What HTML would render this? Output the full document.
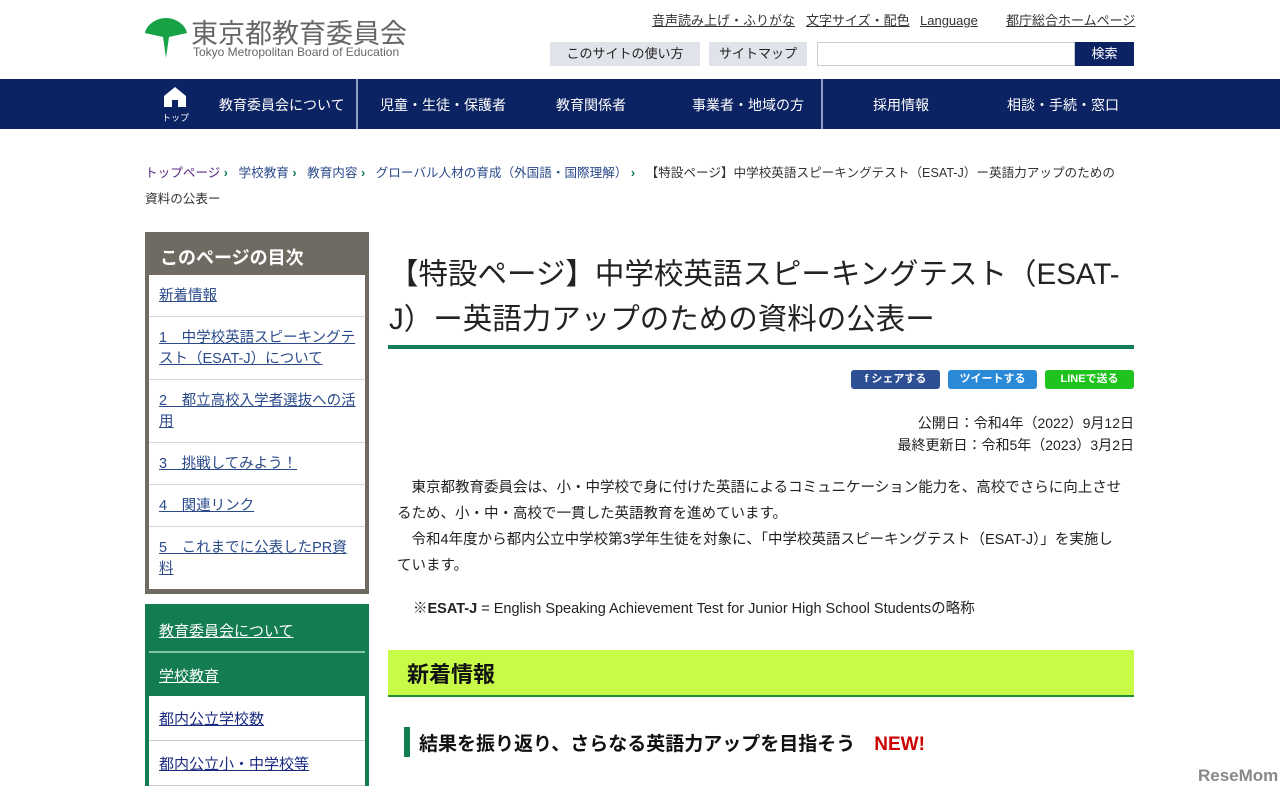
<!DOCTYPE html>
<html><head><meta charset="utf-8"><style>
*{margin:0;padding:0;box-sizing:border-box}
body{width:1280px;height:801px;overflow:hidden;background:#fff;font-family:"Liberation Sans","Noto Sans CJK JP",sans-serif;color:#222;position:relative}
.a{position:absolute;white-space:nowrap}
a{color:inherit}
.top{line-height:16px}
.top a{color:#333;font-size:13px;text-decoration:underline}
.btn{background:#e1e3ea;font-size:13px;color:#222;text-align:center;line-height:24px;height:24px}
.nav{position:absolute;top:79px;left:0;width:1280px;height:50px;background:#0b2263}
.nav span{position:absolute;top:16px;color:#fff;font-size:14px}
.toc{position:absolute;left:145px;top:232px;width:224px;height:362px;background:#6f6b62}
.toc .h{color:#fff;font-weight:bold;font-size:18px;position:absolute;left:15px;top:12px}
.toc ul{position:absolute;left:4px;top:43px;width:216px;background:#fff;list-style:none}
.toc li{border-bottom:1px solid #d6d6d6;padding:11px 10px 9px;font-size:14.5px;line-height:21px;color:#2a4a8a;text-decoration:underline;white-space:nowrap}
.gm{position:absolute;left:145px;top:604px;width:224px;height:182px;background:#137c50}
.gm .t{position:absolute;left:14px;color:#fff;font-size:15px;text-decoration:underline}
.gm .w{position:absolute;left:4px;width:216px;height:45px;background:#fff;border-bottom:1px solid #ccc}
.gm .w span{position:absolute;left:10px;top:12px;color:#1a2a80;font-size:15px;text-decoration:underline}
.sh{position:absolute;top:370px;height:19px;border-radius:3px;color:#fff;font-size:11px;line-height:19px;text-align:center;font-weight:bold}
.p{position:absolute;left:397px;width:760px;font-size:14.5px;line-height:26px;color:#222;white-space:nowrap}
</style></head><body>
<svg class="a" style="left:145px;top:16px" width="42" height="44" viewBox="0 0 42 44"><path d="M21 2C10 2 1 10 0 17l18 4 3 21 3-21 18-4C41 10 32 2 21 2z" fill="#17a246"/></svg>
<div class="a" style="left:191px;top:12px;font-size:27px;color:#666">東京都教育委員会</div>
<div class="a" style="left:193px;top:45px;font-size:12px;color:#666">Tokyo Metropolitan Board of Education</div>
<div class="a top" style="left:652px;top:13px"><a>音声読み上げ・ふりがな</a></div>
<div class="a top" style="left:806px;top:13px"><a>文字サイズ・配色</a></div>
<div class="a top" style="left:920px;top:13px"><a>Language</a></div>
<div class="a top" style="left:1006px;top:13px"><a>都庁総合ホームページ</a></div>
<div class="a btn" style="left:550px;top:42px;width:150px">このサイトの使い方</div>
<div class="a btn" style="left:709px;top:42px;width:98px">サイトマップ</div>
<div class="a" style="left:817px;top:42px;width:258px;height:24px;border:1px solid #ccc;background:#fff"></div>
<div class="a" style="left:1075px;top:42px;width:59px;height:24px;background:#0b2263;color:#fff;font-size:13px;text-align:center;line-height:24px">検索</div>
<div class="nav">
<svg style="position:absolute;left:164px;top:8px" width="22" height="20" viewBox="0 0 22 20"><path d="M11 0L0 9v11h8v-7h6v7h8V9z" fill="#fff"/></svg>
<span style="left:162px;top:32px;font-size:9px">トップ</span>
<span style="left:219px">教育委員会について</span>
<div style="position:absolute;left:356px;top:0;width:2px;height:50px;background:#8fa0c8"></div>
<span style="left:380px">児童・生徒・保護者</span>
<span style="left:556px">教育関係者</span>
<span style="left:692px">事業者・地域の方</span>
<div style="position:absolute;left:821px;top:0;width:2px;height:50px;background:#8fa0c8"></div>
<span style="left:873px">採用情報</span>
<span style="left:1007px">相談・手続・窓口</span>
</div>
<div class="a" style="left:145px;top:160px;font-size:12.6px;color:#333;line-height:26px">
<a style="color:#5a2a80">トップページ</a><b style="color:#137c50"> › </b>&nbsp; <a style="color:#2a4a8a">学校教育</a><b style="color:#137c50"> › </b>&nbsp; <a style="color:#2a4a8a">教育内容</a><b style="color:#137c50"> › </b>&nbsp; <a style="color:#2a4a8a">グローバル人材の育成（外国語・国際理解）</a><b style="color:#137c50"> › </b>&nbsp; 【特設ページ】中学校英語スピーキングテスト（ESAT-J）ー英語力アップのための<br>資料の公表ー</div>
<div class="toc"><div class="h">このページの目次</div>
<ul>
<li>新着情報</li>
<li>1　中学校英語スピーキングテ<br>スト（ESAT-J）について</li>
<li>2　都立高校入学者選抜への活<br>用</li>
<li>3　挑戦してみよう！</li>
<li>4　関連リンク</li>
<li style="border:none">5　これまでに公表したPR資<br>料</li>
</ul></div>
<div class="gm">
<div class="t" style="top:16px">教育委員会について</div>
<div style="position:absolute;left:4px;top:47px;width:216px;height:2px;background:#7fc4a4"></div>
<div class="t" style="top:61px">学校教育</div>
<div class="w" style="top:92px"><span>都内公立学校数</span></div>
<div class="w" style="top:137px;height:45px"><span>都内公立小・中学校等</span></div>
</div>
<div class="a" style="left:389px;top:252px;font-size:29.5px;line-height:45px;color:#222">【特設ページ】中学校英語スピーキングテスト（ESAT-<br>J）ー英語力アップのための資料の公表ー</div>
<div class="a" style="left:388px;top:345px;width:746px;height:4px;background:#137c5c"></div>
<div class="sh" style="left:851px;width:89px;background:#2d4f94">f シェアする</div>
<div class="sh" style="left:948px;width:89px;background:#2a8ad8">ツイートする</div>
<div class="sh" style="left:1045px;width:89px;background:#1ec31e">LINEで送る</div>
<div class="a" style="right:146px;top:412px;font-size:14px;line-height:22px;text-align:right">公開日：令和4年（2022）9月12日<br>最終更新日：令和5年（2023）3月2日</div>
<div class="p" style="top:475px">　東京都教育委員会は、小・中学校で身に付けた英語によるコミュニケーション能力を、高校でさらに向上させ<br>るため、小・中・高校で一貫した英語教育を進めています。<br>　令和4年度から都内公立中学校第3学年生徒を対象に、「中学校英語スピーキングテスト（ESAT-J）」を実施し<br>ています。</div>
<div class="a" style="left:413px;top:597px;font-size:14.5px">※<b>ESAT-J</b> = English Speaking Achievement Test for Junior High School Studentsの略称</div>
<div class="a" style="left:388px;top:650px;width:746px;height:47px;background:#c7fb48;border-bottom:2px solid #238f35"></div>
<div class="a" style="left:407px;top:657px;font-size:22px;font-weight:bold;color:#111">新着情報</div>
<div class="a" style="left:404px;top:727px;width:6px;height:30px;background:#137c50"></div>
<div class="a" style="left:419px;top:729px;font-size:19px;font-weight:bold;color:#111">結果を振り返り、さらなる英語力アップを目指そう　<span style="color:#c00">NEW!</span></div>
<div class="a" style="left:1198px;top:766px;font-size:17px;font-weight:bold;color:#888">ReseMom</div>
</body></html>
